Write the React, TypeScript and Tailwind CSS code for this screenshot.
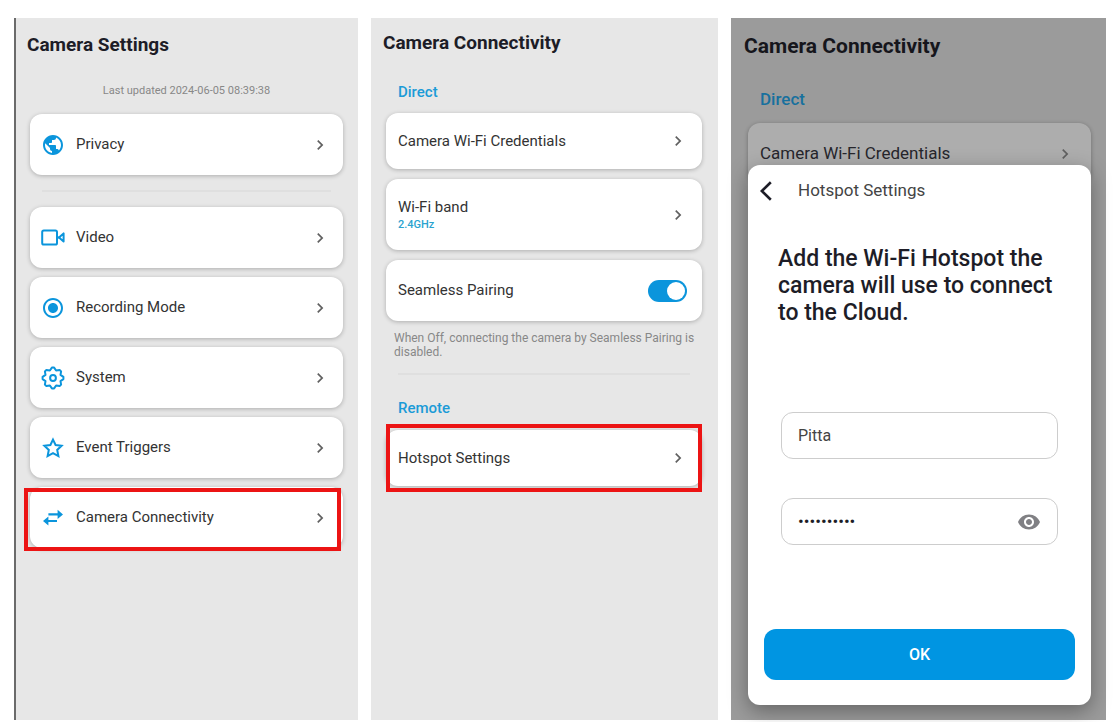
import { useState } from "react";
import type { ReactNode } from "react";
import { MdChevronRight, MdPublic, MdRadioButtonChecked, MdRemoveRedEye } from "react-icons/md";

function VideoIcon() {
  return (
    <svg viewBox="0 0 24 24" className="size-6" fill="none" stroke="currentColor" strokeWidth="2" strokeLinejoin="round" aria-hidden="true">
      <rect x="1.2" y="4.4" width="14.8" height="14.2" rx="1.6" />
      <path d="M18 11.5 22.6 7.4V15.6Z" />
      <path d="M16 11.5h2" />
    </svg>
  );
}

function GearIcon() {
  return (
    <svg viewBox="0 0 24 24" className="size-6" fill="none" stroke="currentColor" strokeWidth="2" strokeLinejoin="round" aria-hidden="true">
      <path d="M8.9 4.5 L10.9 1.6 H13.1 L15.1 4.5 L18.6 3.9 L20.1 5.4 L19.5 8.9 L22.4 10.9 V13.1 L19.5 15.1 L20.1 18.6 L18.6 20.1 L15.1 19.5 L13.1 22.4 H10.9 L8.9 19.5 L5.4 20.1 L3.9 18.6 L4.5 15.1 L1.6 13.1 V10.9 L4.5 8.9 L3.9 5.4 L5.4 3.9Z" />
      <circle cx="12" cy="12" r="2.9" />
    </svg>
  );
}

function StarIcon() {
  return (
    <svg viewBox="0 0 24 24" className="size-6" fill="none" stroke="currentColor" strokeWidth="2" aria-hidden="true">
      <path d="M12 3.6 14.6 9 20.6 9.8 16.2 13.9 17.4 20.2 12 17.2 6.6 20.2 7.8 13.9 3.4 9.8 9.4 9Z" />
    </svg>
  );
}

function SwapIcon() {
  return (
    <svg viewBox="0 0 24 24" className="size-6" fill="none" stroke="currentColor" strokeWidth="2.2" aria-hidden="true">
      <path d="M7.4 8.4H18M16 15H6" />
      <path d="M16.6 3.8 22 8.4l-5.4 4.6ZM7.4 10.4 2 15l5.4 4.6Z" fill="currentColor" stroke="none" />
    </svg>
  );
}

function Chevron() {
  return <MdChevronRight className="size-5 shrink-0 text-[#606060]" aria-hidden="true" />;
}

const cardClass =
  "flex w-full items-center rounded-xl bg-white text-left text-[15px] text-[#333] shadow-[0_1px_4px_rgba(0,0,0,0.25)]";

function MenuCard({ icon, label }: { icon: ReactNode; label: string }) {
  return (
    <button type="button" className={`${cardClass} h-[61px] pr-[13px] pl-[11px]`}>
      <span className="flex w-[35px] shrink-0 text-[#0b95dc]">{icon}</span>
      <span className="flex-1">{label}</span>
      <Chevron />
    </button>
  );
}

function Highlight({ className }: { className: string }) {
  return <span aria-hidden="true" className={`pointer-events-none absolute border-4 border-[#ec1414] ${className}`} />;
}

function SettingsPanel() {
  return (
    <section className="border-l-2 border-[#6b6b6b] bg-[#e7e7e7] pt-[15px] pr-[15px] pl-3.5">
      <h1 className="-ml-[3px] text-[19px] leading-6 font-bold text-[#1d1d27]">Camera Settings</h1>
      <p className="mt-[26px] mb-[15px] text-center text-[11px] leading-4 text-[#888]">Last updated 2024-06-05 08:39:38</p>
      <MenuCard icon={<MdPublic className="size-6" />} label="Privacy" />
      <hr className="mx-3 my-[15px] border-t-2 border-[#dfdfdf]" />
      <nav className="flex flex-col gap-[9px]">
        <MenuCard icon={<VideoIcon />} label="Video" />
        <MenuCard icon={<MdRadioButtonChecked className="size-6" />} label="Recording Mode" />
        <MenuCard icon={<GearIcon />} label="System" />
        <MenuCard icon={<StarIcon />} label="Event Triggers" />
        <div className="relative">
          <MenuCard icon={<SwapIcon />} label="Camera Connectivity" />
          <Highlight className="-bottom-[3px] -left-1.5 right-0.5 top-px" />
        </div>
      </nav>
    </section>
  );
}

function ConnectivityPanel() {
  const [pairing, setPairing] = useState(true);
  return (
    <section className="bg-[#e7e7e7] pt-[13px] pr-4 pl-[15px]">
      <h2 className="-ml-[3px] text-[19px] leading-6 font-bold text-[#1d1d27]">Camera Connectivity</h2>
      <h3 className="mt-[27px] mb-[11px] ml-3 text-[15px] leading-5 font-medium text-[#1b9bd7]">Direct</h3>
      <div className="flex flex-col gap-2.5">
        <button type="button" className={`${cardClass} h-14 pr-3.5 pl-3`}>
          <span className="flex-1">Camera Wi-Fi Credentials</span>
          <Chevron />
        </button>
        <button type="button" className={`${cardClass} h-[71px] pr-3.5 pl-3`}>
          <span className="flex flex-1 flex-col">
            <span className="leading-5">Wi-Fi band</span>
            <span className="text-[11px] leading-4 font-medium text-[#2ba3cf]">2.4GHz</span>
          </span>
          <Chevron />
        </button>
        <label className={`${cardClass} h-[61px] pr-[15px] pl-3`}>
          <span className="flex-1">Seamless Pairing</span>
          <input
            type="checkbox"
            role="switch"
            checked={pairing}
            onChange={(e) => setPairing(e.target.checked)}
            className="flex h-[22px] w-[39px] cursor-pointer appearance-none items-center rounded-full bg-[#bbb] px-0.5 before:size-[18px] before:rounded-full before:bg-white checked:justify-end checked:bg-[#0b95dc]"
          />
        </label>
      </div>
      <p className="mt-2.5 ml-2 text-xs leading-[14px] text-[#888]">
        When Off, connecting the camera by Seamless Pairing is disabled.
      </p>
      <hr className="mx-3 mt-3.5 mb-[23px] border-t-2 border-[#dfdfdf]" />
      <h3 className="mb-3 ml-3 text-[15px] leading-5 font-medium text-[#1b9bd7]">Remote</h3>
      <div className="relative">
        <button type="button" className={`${cardClass} h-14 pr-3.5 pl-3`}>
          <span className="flex-1">Hotspot Settings</span>
          <Chevron />
        </button>
        <Highlight className="-bottom-1.5 -top-1.5 left-0 right-0" />
      </div>
    </section>
  );
}

function HotspotPanel() {
  const [visible, setVisible] = useState(false);
  return (
    <section className="relative flex flex-col bg-[#9b9b9b] pt-4 pr-[15px] pb-[15px] pl-[17px]">
      <h2 className="-ml-1 text-[21px] leading-6 font-bold text-[#16161c]">Camera Connectivity</h2>
      <h3 className="mt-[31px] mb-3.5 ml-3 text-[17px] leading-5 font-medium text-[#17709e]">Direct</h3>
      <div className="flex h-[61px] items-center rounded-xl bg-[#adadad] pr-4 pl-3 text-[17px] text-[#26262c] shadow-[0_1px_4px_rgba(0,0,0,0.3)]">
        <span className="flex-1">Camera Wi-Fi Credentials</span>
        <Chevron />
      </div>
      <form
        onSubmit={(e) => e.preventDefault()}
        className="relative -mt-[19px] flex flex-1 flex-col rounded-xl bg-white px-4 pb-[25px] shadow-[0_6px_20px_rgba(0,0,0,0.35)]"
      >
        <div className="flex h-[52px] items-center">
          <button type="button" aria-label="Back" className="w-[34px]">
            <svg viewBox="0 0 12 20" className="-ml-1 h-5 w-3" fill="none" stroke="#1d1d27" strokeWidth="2.6" aria-hidden="true">
              <path d="M10.8 1.2 1.8 10l9 8.8" />
            </svg>
          </button>
          <span className="text-[17px] text-[#444]">Hotspot Settings</span>
        </div>
        <h4 className="mt-7 mr-2 ml-3.5 text-[23px] leading-[27px] font-medium text-[#1d1d27]">
          Add the Wi-Fi Hotspot the camera will use to connect to the Cloud.
        </h4>
        <input
          type="text"
          aria-label="Hotspot name"
          defaultValue="Pitta"
          className="mx-[17px] mt-[86px] h-[47px] min-w-0 rounded-xl border border-[#cdcdcd] px-4 text-base text-[#444]"
        />
        <div className="mx-[17px] mt-[39px] flex h-[47px] items-center rounded-xl border border-[#cdcdcd] px-4">
          <input
            type={visible ? "text" : "password"}
            aria-label="Hotspot password"
            defaultValue="hotspot123"
            className="min-w-0 flex-1 text-[17px] text-[#1d1d27] outline-none"
          />
          <button type="button" aria-label="Show password" onClick={() => setVisible(!visible)}>
            <MdRemoveRedEye className="size-6 text-[#808084]" />
          </button>
        </div>
        <button type="submit" className="mt-auto h-[51px] rounded-xl bg-[#0095e2] text-base font-medium text-white">
          OK
        </button>
      </form>
    </section>
  );
}

export default function App() {
  return (
    <main className="grid min-h-screen grid-cols-[minmax(0,344fr)_minmax(0,347fr)_minmax(0,375fr)] gap-x-[13px] bg-white pt-[18px] pr-[11px] pb-0.5 pl-3.5 font-['Roboto',sans-serif]">
      <SettingsPanel />
      <ConnectivityPanel />
      <HotspotPanel />
    </main>
  );
}
